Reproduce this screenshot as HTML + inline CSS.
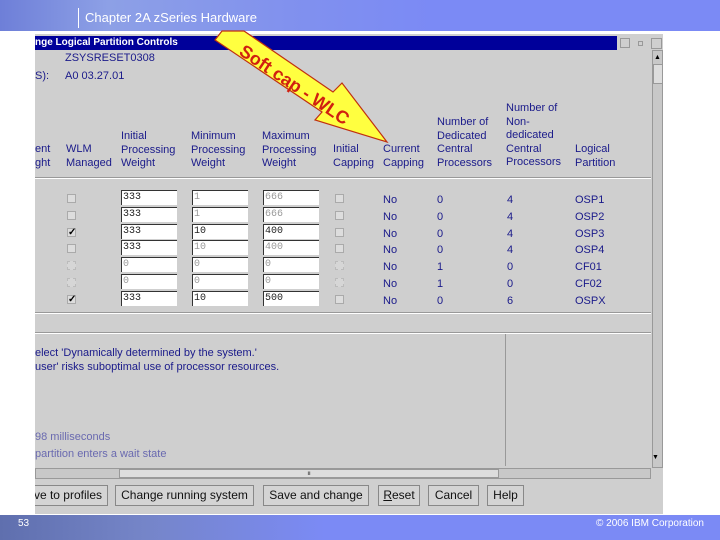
<!DOCTYPE html>
<html><head><meta charset="utf-8"><style>
*{margin:0;padding:0;box-sizing:border-box}
body{width:720px;height:540px;position:relative;overflow:hidden;background:#fff;font-family:"Liberation Sans",sans-serif}
.hdr{position:absolute;left:0;top:0;width:720px;height:31px;background:linear-gradient(90deg,#6e7fd8 0%,#8da0e6 15%,#8191ee 40%,#7b8af5 60%,#7b8af5 100%)}
.hdr span{position:absolute;left:85px;top:10px;color:#fff;font-size:13px}
.hdr i{position:absolute;left:78px;top:8px;width:1px;height:20px;background:#fff}
.ftr{position:absolute;left:0;top:515px;width:720px;height:25px;background:linear-gradient(90deg,#5f6fae 0%,#7585c8 20%,#7b8af5 45%,#7b8af5 100%)}
.ftr .n{position:absolute;left:18px;top:3px;color:#fff;font-size:10px}
.ftr .c{position:absolute;right:16px;top:3px;color:#fff;font-size:10px}
.win{position:absolute;left:35px;top:34px;width:628px;height:480px;background:#cfcfcf;overflow:hidden}
.tb{position:absolute;left:0;top:2px;width:582px;height:14px;background:#00009a;color:#fff;font-size:10px;font-weight:bold;line-height:14px}
.t{position:absolute;color:#1a1a8a;font-size:11px;line-height:13.5px;white-space:nowrap}
.inp{position:absolute;width:56px;height:15px;background:#fff;border-left:1px solid #333;border-top:1px solid #333;font-family:"Liberation Mono",monospace;font-size:10px;line-height:14px;padding-left:1px;color:#222}
.inp.g{color:#999}
.cb{position:absolute;width:9px;height:9px;background:#ddd;border:1px solid #aaa}
.cb.d{border:1px dashed #bbb;background:#d6d6d6}
.btn{position:absolute;top:451px;height:21px;border:1px solid #888;background:#d4d4d4;font-size:12px;line-height:19px;color:#111;white-space:nowrap;text-align:center}
</style></head><body>
<div class="hdr"><i></i><span>Chapter 2A zSeries Hardware</span></div>
<div class="win">
<div class="tb">nge Logical Partition Controls</div>
<div style="position:absolute;left:585px;top:4px;width:10px;height:10px;border:1px solid #999"></div>
<div style="position:absolute;left:603px;top:7px;width:5px;height:5px;border:1px solid #999"></div>
<div style="position:absolute;left:616px;top:4px;width:11px;height:11px;border:1px solid #999"></div>
<div class="t" style="left:30px;top:18px">ZSYSRESET0308</div>
<div class="t" style="left:0;top:36px">S):</div>
<div class="t" style="left:30px;top:36px">A0 03.27.01</div>
<div class="t" style="left:0;top:109px">ent<br>ght</div>
<div class="t" style="left:31px;top:109px">WLM<br>Managed</div>
<div class="t" style="left:86px;top:96px">Initial<br>Processing<br>Weight</div>
<div class="t" style="left:156px;top:96px">Minimum<br>Processing<br>Weight</div>
<div class="t" style="left:227px;top:96px">Maximum<br>Processing<br>Weight</div>
<div class="t" style="left:298px;top:109px">Initial<br>Capping</div>
<div class="t" style="left:348px;top:109px">Current<br>Capping</div>
<div class="t" style="left:402px;top:82px">Number of<br>Dedicated<br>Central<br>Processors</div>
<div class="t" style="left:471px;top:68px">Number of<br>Non-<br>dedicated<br>Central<br>Processors</div>
<div class="t" style="left:540px;top:109px">Logical<br>Partition</div>
<div style="position:absolute;left:0;top:143px;width:616px;height:2px;border-top:1px solid #999;border-bottom:1px solid #fff"></div>
<div class="cb" style="left:32px;top:160px"></div><div class="inp" style="left:86px;top:156px">333</div><div class="inp g" style="left:157px;top:156px">1</div><div class="inp g" style="left:228px;top:156px">666</div><div class="cb" style="left:300px;top:160px"></div>
<div class="cb" style="left:32px;top:177px"></div><div class="inp" style="left:86px;top:173px">333</div><div class="inp g" style="left:157px;top:173px">1</div><div class="inp g" style="left:228px;top:173px">666</div><div class="cb" style="left:300px;top:177px"></div>
<div class="cb" style="left:32px;top:194px;font-size:10px;line-height:8px;font-weight:bold">✓</div><div class="inp" style="left:86px;top:190px">333</div><div class="inp" style="left:157px;top:190px">10</div><div class="inp" style="left:228px;top:190px">400</div><div class="cb" style="left:300px;top:194px"></div>
<div class="cb" style="left:32px;top:210px"></div><div class="inp" style="left:86px;top:206px">333</div><div class="inp g" style="left:157px;top:206px">10</div><div class="inp g" style="left:228px;top:206px">400</div><div class="cb" style="left:300px;top:210px"></div>
<div class="cb d" style="left:32px;top:227px"></div><div class="inp g" style="left:86px;top:223px">0</div><div class="inp g" style="left:157px;top:223px">0</div><div class="inp g" style="left:228px;top:223px">0</div><div class="cb d" style="left:300px;top:227px"></div>
<div class="cb d" style="left:32px;top:244px"></div><div class="inp g" style="left:86px;top:240px">0</div><div class="inp g" style="left:157px;top:240px">0</div><div class="inp g" style="left:228px;top:240px">0</div><div class="cb d" style="left:300px;top:244px"></div>
<div class="cb" style="left:32px;top:261px;font-size:10px;line-height:8px;font-weight:bold">✓</div><div class="inp" style="left:86px;top:257px">333</div><div class="inp" style="left:157px;top:257px">10</div><div class="inp" style="left:228px;top:257px">500</div><div class="cb" style="left:300px;top:261px"></div>
<div class="t" style="left:348px;top:158px;line-height:16.8px">No<br>No<br>No<br>No<br>No<br>No<br>No</div>
<div class="t" style="left:402px;top:158px;line-height:16.8px">0<br>0<br>0<br>0<br>1<br>1<br>0</div>
<div class="t" style="left:472px;top:158px;line-height:16.8px">4<br>4<br>4<br>4<br>0<br>0<br>6</div>
<div class="t" style="left:540px;top:158px;line-height:16.8px">OSP1<br>OSP2<br>OSP3<br>OSP4<br>CF01<br>CF02<br>OSPX</div>
<div style="position:absolute;left:0;top:278px;width:616px;height:2px;border-top:1px solid #999;border-bottom:1px solid #fff"></div>
<div style="position:absolute;left:0;top:298px;width:616px;height:2px;border-top:1px solid #999;border-bottom:1px solid #fff"></div>
<div style="position:absolute;left:470px;top:300px;width:1px;height:132px;background:#999"></div>
<div class="t" style="left:0;top:312px;line-height:14px">elect 'Dynamically determined by the system.'<br>user' risks suboptimal use of processor resources.</div>
<div class="t" style="left:0;top:395px;line-height:17px;color:#6a6ab0">98 milliseconds<br>partition enters a wait state</div>
<div style="position:absolute;left:617px;top:16px;width:11px;height:418px;border:1px solid #999;background:#c8c8c8"></div>
<div style="position:absolute;left:619px;top:20px;width:8px;height:10px;font-size:7px">▲</div>
<div style="position:absolute;left:618px;top:30px;width:10px;height:20px;background:#ddd;border:1px solid #999"></div>
<div style="position:absolute;left:617px;top:420px;width:11px;height:10px;font-size:7px">▼</div>
<div style="position:absolute;left:0;top:434px;width:616px;height:11px;border:1px solid #999;background:#c8c8c8"></div>
<div style="position:absolute;left:84px;top:435px;width:380px;height:9px;background:#ddd;border:1px solid #999;text-align:center;font-size:6px;line-height:8px">ıı</div>
<div class="btn" style="left:-40px;width:113px;text-align:right;padding-right:5px">Save to profiles</div>
<div class="btn" style="left:80px;width:139px">Change running system</div>
<div class="btn" style="left:228px;width:106px">Save and change</div>
<div class="btn" style="left:343px;width:42px"><u>R</u>eset</div>
<div class="btn" style="left:393px;width:51px">Cancel</div>
<div class="btn" style="left:452px;width:37px">Help</div>
</div>
<svg style="position:absolute;left:0;top:0" width="720" height="540">
<polygon points="222,31 244,31 333,92 342,83 387,142 315,120 322,112 215,40" fill="#ffff40" stroke="#c03010" stroke-width="1.2"/>
<text x="0" y="0" transform="translate(238,54) rotate(34)" fill="#d02010" font-family="Liberation Sans" font-weight="bold" font-size="18">Soft cap - WLC</text>
</svg>
<div class="ftr"><span class="n">53</span><span class="c">© 2006 IBM Corporation</span></div>
</body></html>
